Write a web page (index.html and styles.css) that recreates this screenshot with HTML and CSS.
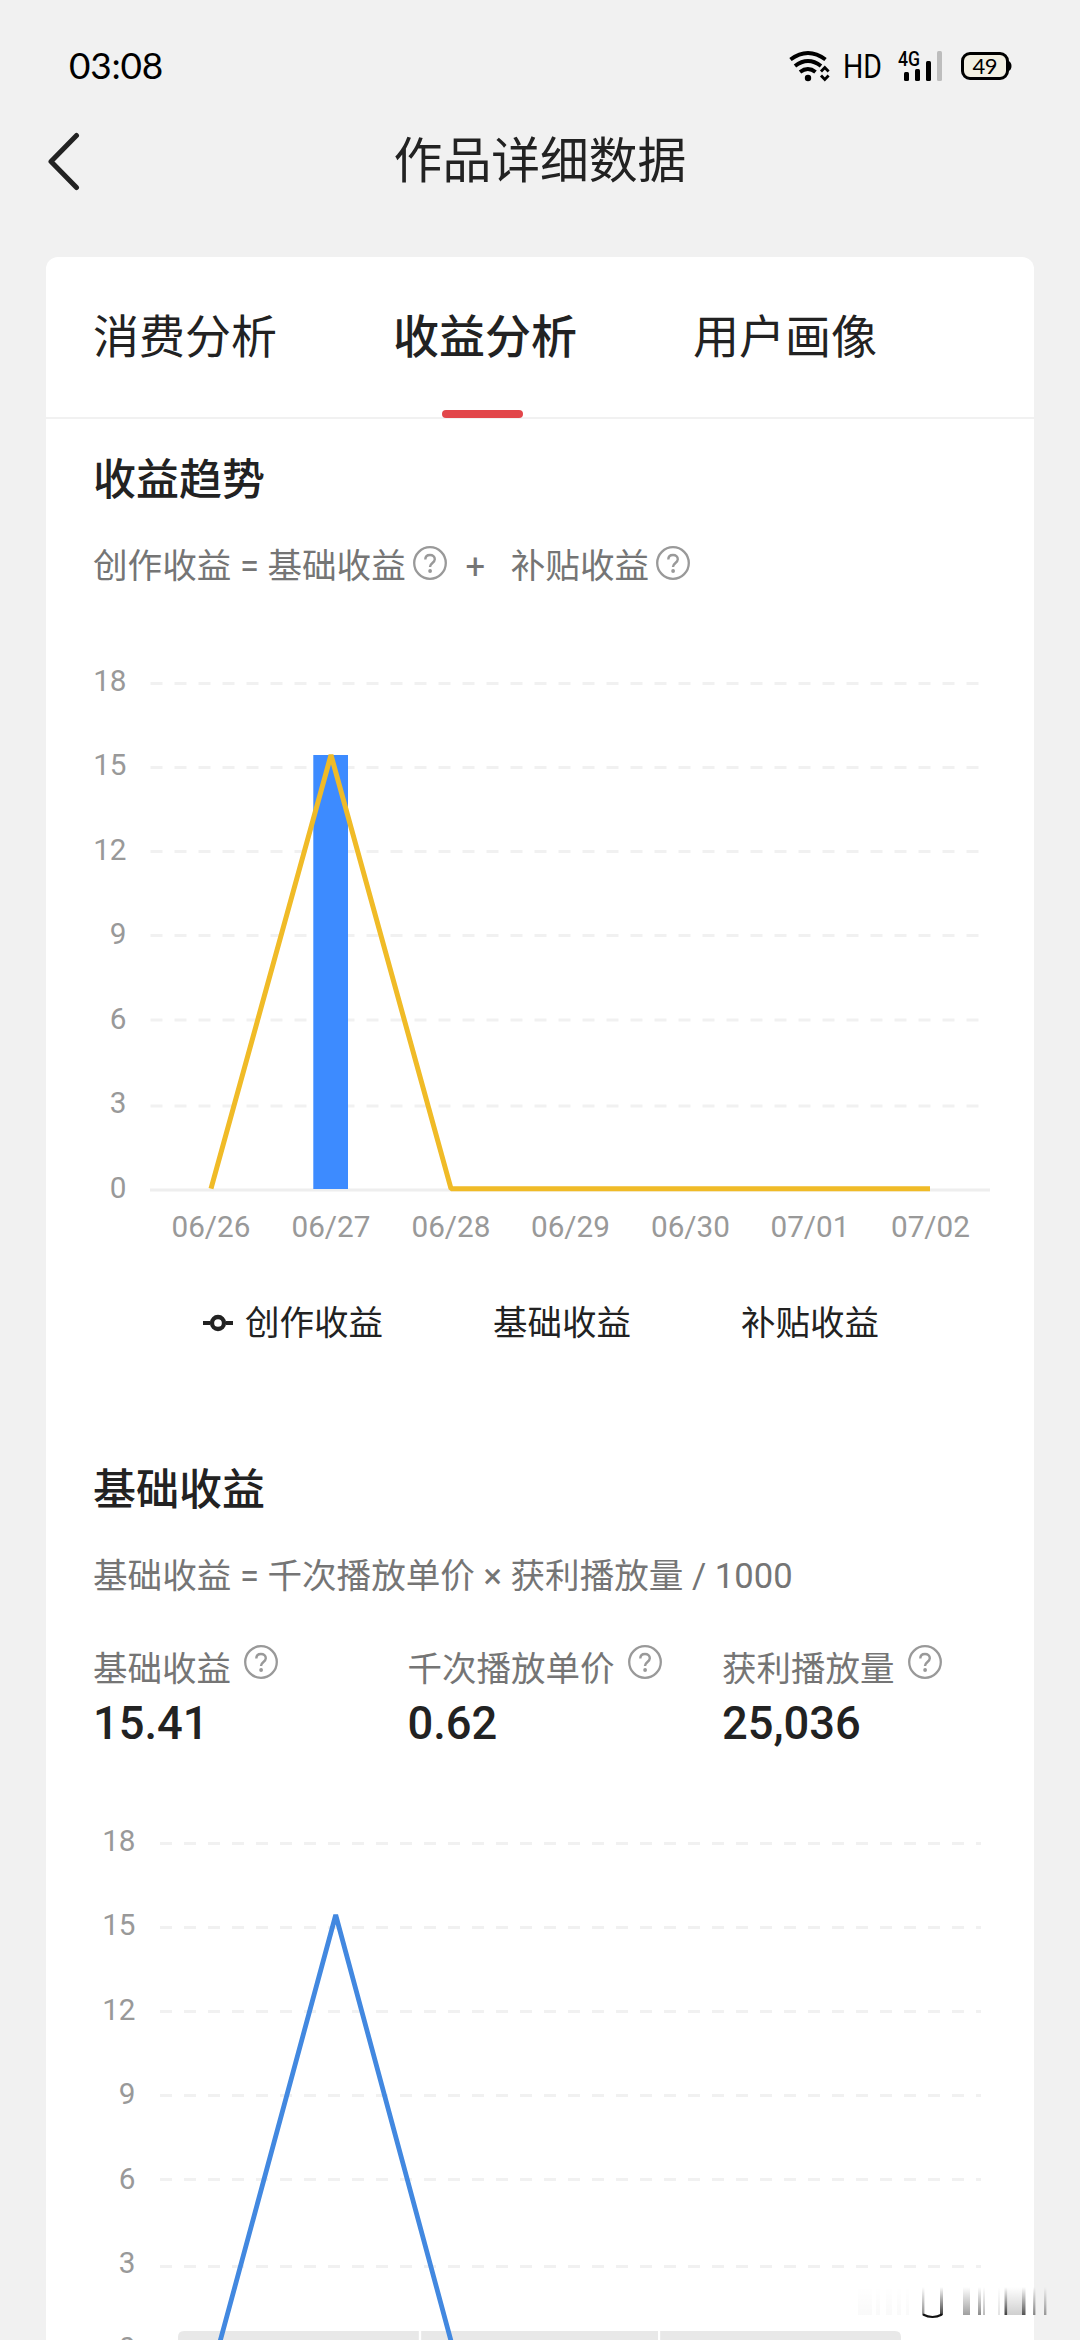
FILE: index.html
```html
<!DOCTYPE html>
<html lang="zh-CN">
<head>
<meta charset="utf-8">
<title>作品详细数据</title>
<link rel="stylesheet" href="styles.css">
</head>
<body>
<svg class="defs" width="0" height="0">
  <symbol id="help" viewBox="0 0 34 34">
    <circle cx="17" cy="17" r="15.8" fill="none" stroke="#999" stroke-width="2.3"/>
    <path d="M12.3 13.6C12.3 10.7 14.2 9 17 9s4.8 1.700 4.800 4.300c0 3.400-4.700 3.900-4.700 7.200v.5" fill="none" stroke="#999" stroke-width="2.400"/>
    <circle cx="17.1" cy="25" r="1.900" fill="#999"/>
  </symbol>
</svg>
<div class="screen">
  <div class="status">
    <span class="clock">03:08</span>
    <svg class="status-icons" width="230" height="40" viewBox="785 46 230 40">
      <g fill="none" stroke="#000" stroke-width="4">
        <path d="M790.5 59.5Q808 46.500 825.500 59.500"/>
        <path d="M795 66Q808 56 821 66"/>
        <path d="M800 72Q808 66 815.500 72"/>
      </g>
      <circle cx="808" cy="78" r="3.200"/>
      <path d="M821 71.500l3.800-4 3.800 4M821 75.500l3.800 4 3.800-4" fill="none" stroke="#000" stroke-width="2.800"/>
      <text class="hd" x="843" y="78" textLength="39" lengthAdjust="spacingAndGlyphs">HD</text>
      <text class="g4" x="898" y="66" textLength="22" lengthAdjust="spacingAndGlyphs">4G</text>
      <rect x="904" y="72" width="5" height="9" rx="1.500"/>
      <rect x="915" y="69" width="5" height="12" rx="1.500"/>
      <rect x="926" y="61" width="5" height="20" rx="1.500"/>
      <rect x="937" y="51" width="5" height="30" rx="1.500" fill="#bdbdbd"/>
      <rect x="962.500" y="53.500" width="45" height="25" rx="7.500" fill="#f2efe2" stroke="#000" stroke-width="3"/>
      <path d="M1008 60.500q3.500 1.500 3.500 5.500t-3.500 5.500z"/>
      <text class="level" x="972.500" y="73.500" textLength="25" lengthAdjust="spacing">49</text>
    </svg>
  </div>
  <header class="header">
    <svg class="back" width="36" height="60" viewBox="0 0 36 60"><path d="M30.500 3.500L5 29.500l25.500 26" fill="none" stroke="#222" stroke-width="5" stroke-linecap="round" stroke-linejoin="round"/></svg>
    <h1 class="title">作品详细数据</h1>
  </header>

  <main class="card">
    <nav class="tabs">
      <span class="tab">消费分析</span>
      <span class="tab tab-active">收益分析</span>
      <span class="tab">用户画像</span>
    </nav>

    <section class="section">
      <h2 class="heading">收益趋势</h2>
      <p class="formula">创作收益 = 基础收益<svg class="help"><use href="#help"/></svg><span class="plus">+</span>补贴收益<svg class="help"><use href="#help"/></svg></p>
      <svg class="chart chart-trend" width="988" height="620" viewBox="46 640 988 620">
        <g stroke="#f1f1f1" stroke-width="3" stroke-dasharray="12 12">
          <path d="M150.500 683.500H981"/><path d="M150.500 767.500H981"/><path d="M150.500 851.500H981"/>
          <path d="M150.500 935.500H981"/><path d="M150.500 1020H981"/><path d="M150.500 1106H981"/>
        </g>
        <path d="M150 1190H990" stroke="#eee" stroke-width="3"/>
        <g class="axis axis-y">
          <text x="126.500" y="691">18</text><text x="126.500" y="775">15</text><text x="126.500" y="860">12</text>
          <text x="126.500" y="944">9</text><text x="126.500" y="1029">6</text><text x="126.500" y="1113">3</text><text x="126.500" y="1198">0</text>
        </g>
        <rect x="313.300" y="755" width="34.700" height="434" fill="#3d8bff"/>
        <path d="M211 1188.700L331 755L451 1188.700H930" fill="none" stroke="#f0bb27" stroke-width="5" stroke-linejoin="bevel"/>
        <g class="axis axis-x">
          <text x="211" y="1237">06/26</text><text x="331" y="1237">06/27</text><text x="451" y="1237">06/28</text>
          <text x="570.500" y="1237">06/29</text><text x="690.500" y="1237">06/30</text><text x="810" y="1237">07/01</text><text x="930.500" y="1237">07/02</text>
        </g>
      </svg>
      <div class="legend">
        <span class="legend-item"><svg class="marker" width="30" height="18" viewBox="0 0 30 18"><path d="M0 9H7M23 9H30" stroke="#222" stroke-width="4"/><circle cx="15" cy="9" r="6" fill="#fff" stroke="#222" stroke-width="4.300"/></svg>创作收益</span>
        <span class="legend-item">基础收益</span>
        <span class="legend-item">补贴收益</span>
      </div>
    </section>

    <section class="section">
      <h2 class="heading">基础收益</h2>
      <p class="formula">基础收益 = 千次播放单价 × 获利播放量 / 1000</p>
      <div class="stats">
        <div class="stat"><span class="label">基础收益<svg class="help"><use href="#help"/></svg></span><strong class="value">15.41</strong></div>
        <div class="stat"><span class="label">千次播放单价<svg class="help"><use href="#help"/></svg></span><strong class="value">0.62</strong></div>
        <div class="stat"><span class="label">获利播放量<svg class="help"><use href="#help"/></svg></span><strong class="value">25,036</strong></div>
      </div>
      <svg class="chart chart-base" width="988" height="540" viewBox="46 1800 988 540">
        <g stroke="#f1f1f1" stroke-width="3" stroke-dasharray="12 12">
          <path d="M160 1843.500H981"/><path d="M160 1927.500H981"/><path d="M160 2011.500H981"/>
          <path d="M160 2095.500H981"/><path d="M160 2179.500H981"/><path d="M160 2266.500H981"/>
        </g>
        <g fill="#e8e8e8">
          <path d="M418.800 2331H184q-6 0-6 6v3H418.800z"/><path d="M421.200 2331H658v9H421.200z"/><path d="M660.200 2331H895q6 0 6 6v3H660.200z"/>
        </g>
        <g class="axis axis-y">
          <text x="135.500" y="1851">18</text><text x="135.500" y="1935">15</text><text x="135.500" y="2020">12</text>
          <text x="135.500" y="2104">9</text><text x="135.500" y="2189">6</text><text x="135.500" y="2273">3</text><text x="135.500" y="2358">0</text>
        </g>
        <path d="M218 2349L335.700 1915L453.200 2349" fill="none" stroke="#4288e0" stroke-width="4.800" stroke-linejoin="bevel"/>
      </svg>
    </section>
  </main>

  <svg class="overlay" width="200" height="40" viewBox="855 2280 200 40">
    <defs><linearGradient id="fade" x1="0" y1="0" x2="0" y2="1"><stop offset="0" stop-color="#000" stop-opacity="0"/><stop offset="1" stop-color="#000" stop-opacity=".75"/></linearGradient></defs>
    <g fill="url(#fade)">
      <path opacity=".03" d="M858 2286h14v29h-14zM876 2286h4v29h-4zM886 2286h6v29h-6zM897 2286h4v29h-4zM906 2286h3v29h-3z"/>
      <rect x="922" y="2287" width="2.400" height="28" opacity=".6"/>
      <rect x="940" y="2287" width="3" height="28"/>
      <rect x="963" y="2287" width="7" height="28" opacity=".5"/>
      <rect x="978" y="2287" width="3" height="28" opacity=".6"/><rect x="983" y="2287" width="2" height="28" opacity=".35"/>
      <rect x="998" y="2287" width="2" height="28" opacity=".15"/>
      <rect x="1004.500" y="2287" width="2.600" height="28"/><rect x="1007" y="2287" width="15" height="28" opacity=".25"/><rect x="1022" y="2287" width="3.500" height="28" opacity=".9"/>
      <rect x="1033" y="2287" width="2.400" height="28" opacity=".6"/><rect x="1044" y="2287" width="2.400" height="28" opacity=".5"/>
    </g>
    <path d="M923 2314.500q9.500 5 19 0" fill="none" stroke="#111" stroke-width="2"/>
  </svg>
</div>
</body>
</html>
```
FILE: styles.css
```css
body { margin: 0; }
h1, h2, p { margin: 0; font-weight: 400; }
.defs { position: absolute; }
.screen {
  position: relative;
  width: 1080px;
  height: 2340px;
  overflow: hidden;
  background: #f1f1f1;
  color: #222;
  font-family: Roboto, "Noto Sans CJK SC", sans-serif;
}
.status {
  display: flex;
  justify-content: space-between;
  align-items: center;
  height: 132px;
  box-sizing: border-box;
  padding: 0 65px 0 69px;
}
.clock { padding-bottom: 3px; font: 37px Lato, sans-serif; color: #000; letter-spacing: -0.2px; }
.status-icons { display: block; }
.hd { font: 34px Roboto, sans-serif; }
.g4 { font: 500 21px Roboto, sans-serif; }
.level { font: 22px Lato, sans-serif; }
.header {
  display: grid;
  grid-template-columns: 46px 1fr 46px;
  align-items: center;
  height: 58px;
  padding: 0 46px 67px;
}
.title { text-align: center; font-size: 48.8px; line-height: 60px; }
.card {
  display: flex;
  flex-direction: column;
  width: 988px;
  height: 2083px;
  margin: 0 auto;
  background: #fff;
  border-radius: 12px 12px 0 0;
}
.tabs {
  display: flex;
  gap: 116px;
  height: 160px;
  padding-left: 47px;
  border-bottom: 2px solid #f1f1f1;
}
.tab {
  display: flex;
  flex-direction: column;
  align-items: center;
  width: 184px;
  font-size: 46px;
  line-height: 160px;
  white-space: nowrap;
}
.tab-active { font-weight: 500; }
.tab-active::after {
  content: "";
  flex: none;
  width: 81px;
  height: 8px;
  margin: -7px 5px 0 0;
  border-radius: 4px;
  background: #e2464a;
}
.section { display: flex; flex-direction: column; }
.heading {
  padding: 30px 47px 0;
  font-size: 43px;
  font-weight: 500;
  line-height: 62px;
}
.formula {
  display: flex;
  align-items: center;
  height: 50px;
  padding: 30px 47px 0;
  font-size: 34.600px;
  line-height: 50px;
  color: #757575;
  white-space: pre;
}
.help { flex: none; width: 34px; height: 34px; margin: -6px 0 0 7px; }
.plus { width: 57px; padding-right: 7px; text-align: center; }
.chart { display: block; flex: none; }
.chart-trend { margin-top: 49px; }
.axis { font-size: 29.700px; fill: #999; }
.axis-y { text-anchor: end; }
.axis-x { text-anchor: middle; }
.legend {
  display: flex;
  gap: 110px;
  height: 50px;
  padding: 38px 0 81px 157px;
  font-size: 34.500px;
  line-height: 50px;
}
.legend-item { display: flex; align-items: center; }
.marker { margin-right: 12px; }
.stats { display: grid; grid-template-columns: repeat(3, 314.500px); padding: 40px 0 0 47px; }
.stat { display: flex; flex-direction: column; }
.label { display: flex; align-items: center; height: 50px; font-size: 34.500px; color: #757575; }
.label .help { margin: -9px 0 0 13px; }
.value { font-size: 45.300px; font-weight: 500; line-height: 66px; }
.chart-base { margin-top: 43px; }
.overlay { position: absolute; left: 855px; top: 2280px; }
```
